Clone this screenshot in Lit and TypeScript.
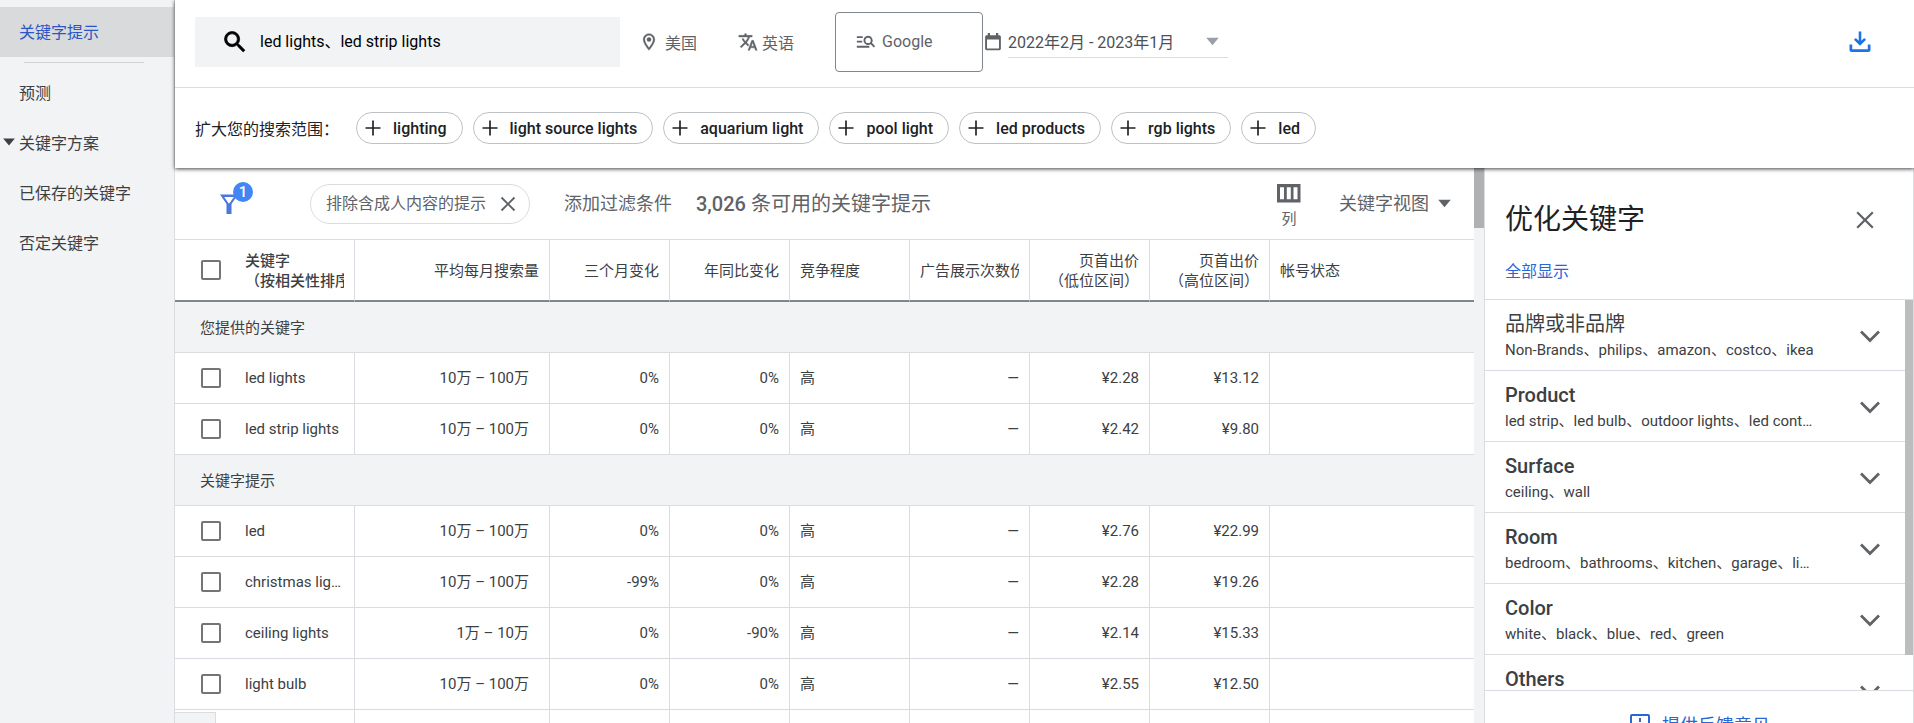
import { LitElement, html, css, svg } from "lit";
import { customElement } from "lit/decorators.js";

const icons: Record<string, unknown> = {
  search: svg`<path d="M15.5 14h-.79l-.28-.27A6.47 6.47 0 0 0 16 9.5 6.5 6.5 0 1 0 9.5 16c1.61 0 3.09-.59 4.23-1.57l.27.28v.79l5 4.99L20.49 19l-4.99-5zm-6 0C7.010 14 5 11.990 5 9.500S7.010 5 9.500 5 14 7.010 14 9.500 11.990 14 9.500 14z" stroke="currentColor" stroke-width=".6"/>`,
  pin: svg`<path d="M12 2C8.130 2 5 5.130 5 9c0 5.250 7 13 7 13s7-7.750 7-13c0-3.870-3.130-7-7-7zM7 9c0-2.760 2.240-5 5-5s5 2.240 5 5c0 2.880-2.880 7.190-5 9.880C9.920 16.210 7 11.850 7 9z" stroke="currentColor" stroke-width=".4"/><circle cx="12" cy="9" r="2.700"/>`,
  translate: svg`<path d="M12.870 15.070l-2.540-2.510.03-.03A17.520 17.520 0 0 0 14.070 6H17V4h-7V2H8v2H1v1.990h11.170C11.500 7.920 10.440 9.750 9 11.350 8.070 10.320 7.300 9.190 6.690 8h-2c.73 1.630 1.730 3.170 2.980 4.560l-5.090 5.020L4 19l5-5 3.110 3.110.76-2.040zM18.500 10h-2L12 22h2l1.120-3h4.750L21 22h2l-4.500-12zm-2.620 7l1.620-4.330L19.120 17h-3.240z" stroke="currentColor" stroke-width=".5"/>`,
  network: svg`<path d="M1 5h7v2.200H1zM1 10.500h6.500v2.200H1zM1 16.500h15v2.500H1z"/><path d="M14.500 4.500a5.500 5.500 0 1 0 3 10.100l3.900 4 1.600-1.600-3.900-4a5.500 5.500 0 0 0-4.600-8.500zm0 2.400a3.200 3.200 0 1 1 0 6.400 3.200 3.200 0 0 1 0-6.400z"/>`,
  calendar: svg`<path d="M20 3h-1V0h-3v3H8V0H5v3H4C2.700 3 1.500 3.900 1.500 5v16c0 1.100 1 2 2.500 2h16c1.500 0 2.500-.9 2.500-2V5c0-1.100-1-2-2.500-2zm0 17.800H4V8.500h16z"/>`,
  arrow: svg`<path d="M2 6h20L12 18z"/>`,
  download: svg`<path d="M10.700 1.500h2.600v9.300l2.900-2.900 1.800 1.800-6 6-6-6 1.800-1.800 2.900 2.900zM1.500 14.500h2.700v4.800h15.600v-4.800h2.700V20a2 2 0 0 1-2 2h-17a2 2 0 0 1-2-2z"/>`,
  plus: svg`<path d="M11 3h2v8h8v2h-8v8h-2v-8H3v-2h8z"/>`,
  filter: svg`<path d="M3 2.500h18L14.500 12v10h-5V12zM7.200 5l4.300 6.300h1L16.800 5z" fill-rule="evenodd"/>`,
  close: svg`<path d="M5 3.400 12 10.400l7-7L20.600 5l-7 7 7 7-1.600 1.600-7-7-7 7L3.400 19l7-7-7-7z"/>`,
  columns: svg`<path d="M0 3h23.500v18.500H0zM3 6.200v12h4v-12zm6.800 0v12h4v-12zm6.700 0v12h4v-12z" fill-rule="evenodd"/>`,
  chevron: svg`<path d="M3 7.500l9 9 9-9" fill="none" stroke="currentColor" stroke-width="2.800"/>`,
  feedback: svg`<path d="M20 2H4a2 2 0 0 0-2 2v18l4-4h14a2 2 0 0 0 2-2V4a2 2 0 0 0-2-2zm0 14H4V4h16zM11 6h2v4h-2zm0 6h2v2h-2z"/>`,
};

const icon = (name: string, cls = "") =>
  html`<svg class="icon ${cls}" viewBox="0 0 24 24" fill="currentColor" aria-hidden="true">${icons[name]}</svg>`;

const base = css`
  * { box-sizing: border-box; }
  :host { font-family: Roboto, "Noto Sans CJK SC", sans-serif; color: #3c4043; }
  button, input { font: inherit; color: inherit; background: none; border: 0; padding: 0; margin: 0; }
  button { display: inline-flex; align-items: center; white-space: nowrap; cursor: pointer; }
  a { text-decoration: none; color: inherit; }
  .icon { width: 20px; height: 20px; flex: none; display: block; }
`;

@customElement("side-nav")
class SideNav extends LitElement {
  static styles = [base, css`
    :host { display: block; padding-top: 7px; background: #f1f3f4; border-right: 1px solid #dadce0; font-size: 16px; }
    .item { display: flex; align-items: center; height: 50px; padding-left: 19px; }
    .active { background: #d9dadc; color: #2a56c6; padding-bottom: 2px; }
    .rule { height: 1px; margin: 5px 30px 4px 24px; background: #d0d2d5; }
    .parent { padding-left: 2px; gap: 3px; }
    .caret { width: 14px; height: 14px; }
  `];
  render() {
    return html`<nav>
      <a class="item active" href="#ideas" aria-current="page">关键字提示</a>
      <div class="rule"></div>
      <a class="item" href="#forecast">预测</a>
      <a class="item parent" href="#plan">${icon("arrow", "caret")}关键字方案</a>
      <a class="item" href="#saved">已保存的关键字</a>
      <a class="item" href="#negative">否定关键字</a>
    </nav>`;
  }
}

@customElement("plan-header")
class PlanHeader extends LitElement {
  static styles = [base, css`
    :host { display: block; background: #fff; position: relative; z-index: 2; font-size: 16px; box-shadow: 0 1px 4px rgba(0, 0, 0, 0.75); }
    .bar { display: flex; align-items: center; height: 88px; padding: 0 42px 4px 20px; border-bottom: 1px solid #dadce0; }
    .search { display: flex; align-items: center; gap: 11px; width: 425px; height: 50px; padding-left: 26px; background: #f1f3f4; color: #000; }
    .search .icon { width: 28px; height: 28px; }
    .search input { flex: 1; min-width: 0; height: 32px; line-height: 32px; outline: 0; }
    .setting { gap: 6px; color: #5f6368; }
    .place { margin-left: 19px; }
    .lang { margin-left: 41px; gap: 4px; }
    .net { margin-left: 41px; width: 148px; height: 60px; padding-left: 20px; border: 1px solid #80868b; border-radius: 4px; }
    .cal { margin-left: 1px; width: 18px; height: 18px; color: #5f6368; }
    .date { margin-left: 6px; width: 220px; height: 32px; justify-content: space-between; padding-right: 8px; border-bottom: 1px solid #dadce0; color: #4d5156; }
    .date .icon { width: 15px; height: 15px; color: #9aa0a6; }
    .download { margin-left: auto; color: #1a73e8; }
    .download .icon { width: 24px; height: 24px; }
    .broaden { display: flex; align-items: center; height: 80px; padding-left: 20px; color: #202124; }
    .chips { display: flex; gap: 10px; margin-left: 17px; }
    .chip { height: 32px; padding: 0 15px 0 6px; gap: 10px; border: 1px solid #bdc1c6; border-radius: 16px; font-weight: 500; }
  `];
  render() {
    const chips = ["lighting", "light source lights", "aquarium light", "pool light", "led products", "rgb lights", "led"];
    return html`
      <div class="bar">
        <label class="search">${icon("search")}<input type="text" aria-label="关键字" value="led lights、led strip lights" /></label>
        <button class="setting place">${icon("pin")}美国</button>
        <button class="setting lang">${icon("translate")}英语</button>
        <button class="setting net">${icon("network")}Google</button>
        ${icon("calendar", "cal")}
        <button class="date">2022年2月 - 2023年1月${icon("arrow")}</button>
        <button class="download" aria-label="下载">${icon("download")}</button>
      </div>
      <div class="broaden">
        <span>扩大您的搜索范围：</span>
        <div class="chips">${chips.map((c) => html`<button class="chip">${icon("plus")}${c}</button>`)}</div>
      </div>`;
  }
}

type Row = [string, string, string, string, string, string];

@customElement("keyword-table")
class KeywordTable extends LitElement {
  static styles = [base, css`
    :host { display: block; overflow: hidden; font-size: 15px; line-height: 20px; }
    .tools { display: flex; align-items: center; height: 72px; padding: 0 22px 0 42px; border-bottom: 1px solid #dadce0; color: #5f6368; font-size: 18px; }
    .filter { position: relative; width: 24px; height: 24px; color: #4c77df; }
    .filter .icon { width: 24px; height: 24px; }
    .badge { position: absolute; left: 16px; top: -10px; width: 20px; height: 20px; border-radius: 10px; background: #4285f4; color: #fff; font-size: 15px; font-weight: 500; text-align: center; }
    .tag { display: flex; align-items: center; gap: 12px; width: 220px; height: 40px; margin-left: 69px; padding-left: 15px; border: 1px solid #dadce0; border-radius: 20px; font-size: 16px; }
    .add { margin-left: 34px; }
    .count { margin: 0 0 0 24px; font-size: 20px; font-weight: 400; }
    .num { font-weight: 500; }
    .cols { flex-direction: column; margin-left: auto; padding-top: 2px; font-size: 15px; gap: 4px; }
    .cols .icon { width: 24px; height: 24px; }
    .view { margin-left: 38px; gap: 8px; }
    .view .icon { width: 15px; height: 15px; }
    table { width: 100%; table-layout: fixed; border-collapse: separate; border-spacing: 0; }
    .c-box { width: 60px; }
    .c-key { width: 120px; }
    .c-vol { width: 195px; }
    .c-std { width: 120px; }
    th, td { padding: 0 10px; border-right: 1px solid #dadce0; border-bottom: 1px solid #dadce0; text-align: left; font-weight: 400; white-space: nowrap; overflow: hidden; }
    th { height: 62px; padding-top: 2px; border-bottom: 2px solid #80868b; }
    td { height: 51px; text-overflow: ellipsis; }
    th:last-child, td:last-child, .box { border-right: 0; }
    .box { padding: 0 0 0 26px; }
    .key { font-weight: 500; }
    .clip { display: block; overflow: hidden; }
    .r { text-align: right; }
    .vol { padding-right: 20px; }
    .group { padding: 2px 0 0 25px; background: #f1f3f4; }
    .check { display: block; appearance: none; width: 20px; height: 20px; border: 2px solid #757575; border-radius: 2px; }
  `];
  row = (r: Row) => html`<tr>
    <td class="box"><input class="check" type="checkbox" aria-label=${r[0]} /></td>
    <td>${r[0]}</td><td class="r vol">${r[1]}</td><td class="r">${r[2]}</td><td class="r">${r[3]}</td>
    <td>高</td><td class="r">—</td><td class="r">${r[4]}</td><td class="r">${r[5]}</td><td></td></tr>`;
  render() {
    const big = "10万 – 100万";
    const given: Row[] = [
      ["led lights", big, "0%", "0%", "¥2.28", "¥13.12"],
      ["led strip lights", big, "0%", "0%", "¥2.42", "¥9.80"],
    ];
    const ideas: Row[] = [
      ["led", big, "0%", "0%", "¥2.76", "¥22.99"],
      ["christmas lights", big, "-99%", "0%", "¥2.28", "¥19.26"],
      ["ceiling lights", "1万 – 10万", "0%", "-90%", "¥2.14", "¥15.33"],
      ["light bulb", big, "0%", "0%", "¥2.55", "¥12.50"],
    ];
    return html`
      <div class="tools">
        <button class="filter" aria-label="过滤条件">${icon("filter")}<span class="badge">1</span></button>
        <div class="tag">排除含成人内容的提示<button aria-label="移除">${icon("close")}</button></div>
        <button class="add">添加过滤条件</button>
        <h2 class="count"><span class="num">3,026</span> 条可用的关键字提示</h2>
        <button class="cols">${icon("columns")}列</button>
        <button class="view">关键字视图${icon("arrow")}</button>
      </div>
      <table>
        <colgroup>
          <col class="c-box" /><col class="c-key" /><col class="c-vol" />
          ${[1, 2, 3, 4, 5, 6].map(() => html`<col class="c-std" />`)}<col />
        </colgroup>
        <thead><tr>
          <th class="box"><input class="check" type="checkbox" aria-label="全选" /></th>
          <th class="key"><span class="clip">关键字<br />（按相关性排序）</span></th>
          <th class="r">平均每月搜索量</th><th class="r">三个月变化</th><th class="r">年同比变化</th>
          <th>竞争程度</th><th><span class="clip">广告展示次数份额</span></th>
          <th class="r">页首出价<br />（低位区间）</th><th class="r">页首出价<br />（高位区间）</th><th>帐号状态</th>
        </tr></thead>
        <tbody>
          <tr><td class="group" colspan="10">您提供的关键字</td></tr>
          ${given.map(this.row)}
          <tr><td class="group" colspan="10">关键字提示</td></tr>
          ${ideas.map(this.row)}
          <tr><td class="box"></td>${[1, 2, 3, 4, 5, 6, 7, 8, 9].map(() => html`<td></td>`)}</tr>
        </tbody>
      </table>`;
  }
}

@customElement("refine-panel")
class RefinePanel extends LitElement {
  static styles = [base, css`
    :host { display: flex; flex-direction: column; height: calc(100% + 33px); border-left: 1px solid #dadce0; border-right: 1px solid #dadce0; background: #fff; }
    .head { flex: none; height: 132px; padding: 32px 36px 0 20px; border-bottom: 1px solid #dadce0; }
    .top { display: flex; justify-content: space-between; align-items: center; }
    .title { margin: 0; font-size: 28px; line-height: 40px; font-weight: 400; color: #202124; }
    .top .icon { width: 24px; height: 24px; color: #5f6368; }
    .all { display: block; margin-top: 20px; font-size: 16px; line-height: 24px; color: #2a66d4; }
    .body { flex: 1; min-height: 0; display: flex; }
    .list { flex: 1; min-width: 0; overflow: hidden; }
    .item { display: flex; width: 100%; height: 71px; padding: 2px 23px 0 20px; border-bottom: 1px solid #dadce0; text-align: left; gap: 44px; }
    .texts { flex: 1; min-width: 0; }
    .name { display: block; font-size: 20px; line-height: 28px; font-weight: 500; }
    .cjk { font-weight: 400; }
    .sub { display: block; font-size: 15px; line-height: 24px; overflow: hidden; text-overflow: ellipsis; }
    .item .icon { width: 24px; height: 24px; color: #5f6368; }
    .track { width: 8px; background: #fff; }
    .thumb { width: 100%; height: 91%; background: #bdbdbd; }
    .foot { flex: none; height: 66px; display: flex; align-items: center; justify-content: center; border-top: 1px solid #dadce0; }
    .feedback { gap: 10px; font-size: 18px; color: #2a66d4; }
    .feedback .icon { width: 24px; height: 24px; }
  `];
  render() {
    const groups = [
      ["品牌或非品牌", "Non-Brands、philips、amazon、costco、ikea"],
      ["Product", "led strip、led bulb、outdoor lights、led controller"],
      ["Surface", "ceiling、wall"],
      ["Room", "bedroom、bathrooms、kitchen、garage、living room"],
      ["Color", "white、black、blue、red、green"],
      ["Others", ""],
    ];
    return html`
      <div class="head">
        <div class="top"><h2 class="title">优化关键字</h2><button aria-label="关闭">${icon("close")}</button></div>
        <a class="all" href="#all">全部显示</a>
      </div>
      <div class="body">
        <div class="list">
          ${groups.map(([n, s], i) => html`<button class="item" aria-expanded="false">
            <span class="texts"><span class="name ${i === 0 ? "cjk" : ""}">${n}</span><span class="sub">${s || "\u00a0"}</span></span>
            ${icon("chevron")}</button>`)}
        </div>
        <div class="track"><div class="thumb"></div></div>
      </div>
      <div class="foot"><button class="feedback">${icon("feedback")}提供反馈意见</button></div>`;
  }
}

@customElement("app-root")
class AppRoot extends LitElement {
  static styles = [base, css`
    :host { display: grid; grid-template-columns: 175px minmax(0, 1fr); grid-template-rows: minmax(0, 1fr); height: 100vh; overflow: hidden; background: #fff; position: relative; }
    .main { display: flex; flex-direction: column; min-height: 0; }
    .work { flex: 1; min-height: 0; display: grid; grid-template-columns: minmax(0, 1fr) 10px 430px; grid-template-rows: minmax(0, 1fr); overflow: hidden; }
    .track { background: #f1f3f4; }
    .thumb { height: 60px; background: #b0b1b3; }
    .status { position: absolute; left: 175px; bottom: 0; width: 41px; height: 11px; background: #f1f3f4; border: solid #dadce0; border-width: 1px 1px 0 0; }
  `];
  render() {
    return html`
      <side-nav></side-nav>
      <div class="main">
        <plan-header></plan-header>
        <div class="work">
          <keyword-table></keyword-table>
          <div class="track"><div class="thumb"></div></div>
          <refine-panel></refine-panel>
        </div>
      </div>
      <div class="status"></div>`;
  }
}
